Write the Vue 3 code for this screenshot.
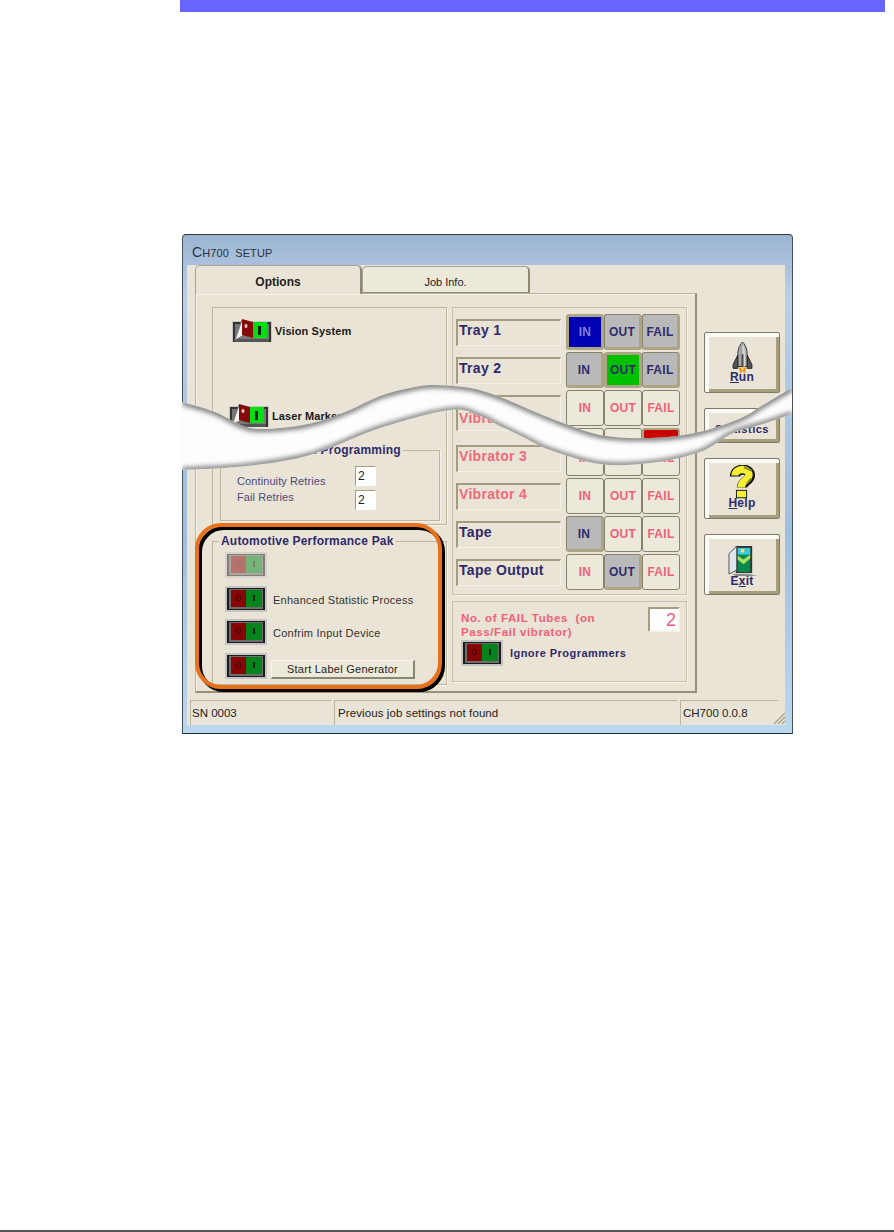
<script setup>
const rows = [
  { label: 'Tray 1', on: true, states: ['blue', 'grey', 'grey'] },
  { label: 'Tray 2', on: true, states: ['grey', 'green', 'grey'] },
  { label: 'Vibrator 1', torn: true, states: ['', '', ''] },
  { states: ['', '', 'red'], cut: true },
  { label: 'Vibrator 3', states: ['', '', ''] },
  { label: 'Vibrator 4', states: ['', '', ''] },
  { label: 'Tape', on: true, states: ['grey', '', ''] },
  { label: 'Tape Output', on: true, states: ['', 'grey', ''] }
]
const names = ['IN', 'OUT', 'FAIL']

// curve through the points of the tear
const smooth = (pts) => {
  let d = ''
  for (let i = 0; i < pts.length - 1; i++) {
    const p0 = pts[i - 1] || pts[i]
    const p1 = pts[i]
    const p2 = pts[i + 1]
    const p3 = pts[i + 2] || p2
    d += ` C${p1[0] + (p2[0] - p0[0]) / 6} ${p1[1] + (p2[1] - p0[1]) / 6} ${p2[0] - (p3[0] - p1[0]) / 6} ${p2[1] - (p3[1] - p1[1]) / 6} ${p2[0]} ${p2[1]}`
  }
  return d
}
const topEdge = [[182, 402], [215, 412], [250, 428], [290, 427], [320, 421], [350, 410], [380, 396], [410, 388], [433, 385], [470, 388], [500, 397], [550, 418], [600, 435], [650, 438], [695, 433], [739, 419], [763, 405], [792, 388]]
const botEdge = [[792, 414], [763, 424], [733, 433], [700, 452], [650, 463], [600, 464], [550, 450], [525, 438], [500, 426], [480, 416], [450, 410], [380, 428], [310, 455], [247, 466], [182, 470]]
const topPath = `M182 402${smooth(topEdge)}`
const botPath = `M792 414${smooth(botEdge)}`
const bandPath = `${topPath} L792 414${smooth(botEdge)} Z`
</script>

<template>
  <div class="page">
    <svg class="defs" width="0" height="0">
      <symbol id="sw-off" viewBox="0 0 42 26">
        <rect width="42" height="26" fill="#c4c4c4" />
        <rect x="2" y="2" width="38" height="22" fill="#1c1c1c" />
        <rect x="4" y="3" width="34" height="20" fill="#6e6e6e" />
        <rect x="6" y="4" width="15" height="17" fill="#870505" />
        <rect x="21" y="4" width="16" height="17" fill="#04841a" />
        <ellipse cx="13.5" cy="12" rx="2" ry="3" fill="none" stroke="#3a0000" />
        <rect x="28" y="9" width="2" height="6" fill="#021" />
      </symbol>
      <symbol id="sw-on" viewBox="0 0 40 26">
        <rect y="3" width="40" height="21" fill="#c8c8c0" />
        <rect x="1" y="4" width="2" height="20" fill="#333" />
        <rect x="2" y="4" width="37" height="2" fill="#333" />
        <rect x="2" y="21" width="37" height="3" fill="#555" />
        <rect x="37" y="4" width="2" height="20" fill="#333" />
        <rect x="3" y="6" width="34" height="15" fill="#777" />
        <polygon points="3,22 10,2 12,17" fill="#f4f4f0" stroke="#777" />
        <polygon points="10,1 21,4 21,20 10,17" fill="#870a0a" />
        <ellipse cx="14" cy="8" rx="1.5" ry="2" fill="#f0c8c8" />
        <rect x="21" y="4" width="14" height="16" fill="#04de12" />
        <rect x="26" y="8" width="3" height="9" fill="#021" />
      </symbol>
      <symbol id="rocket" viewBox="0 0 24 34">
        <path d="M12 0 C8 4 7 9 7 14 V26 H17 V14 C17 9 16 4 12 0 Z" fill="#a8a8a8" stroke="#333" />
        <path d="M12 1 C14 5 15 10 15 14 V26 H12 Z" fill="#d6d6d6" />
        <path d="M7 14 L2 24 V28 H7 Z M17 14 L22 24 V28 H17 Z" fill="#555" stroke="#222" />
        <rect x="11" y="13" width="2" height="13" fill="#444" />
        <path d="M8 27 H16 L14 34 L12 30 L10 34 Z" fill="#f08a20" />
        <path d="M10 27 H14 L12 31 Z" fill="#ffd84a" />
      </symbol>
      <symbol id="help" viewBox="0 0 28 36">
        <path d="M6.5 12 C6.5 3 22.5 2 22.5 11 C22.5 17 14 17 14 24" fill="none" stroke="#111" stroke-width="11" />
        <path d="M6.5 11 C6.5 3 21.5 2 21.5 10.5 C21.5 16 13 16 13 24" fill="none" stroke="#f4ee30" stroke-width="8" />
        <rect x="8" y="27" width="11" height="8" fill="#f4ee30" stroke="#111" />
        <path d="M16 2 L25 6 M24 14 L19 20" stroke="#8a8420" stroke-width="2" />
      </symbol>
      <symbol id="exit" viewBox="0 0 30 32">
        <path d="M4 30 H22 L30 32 H8 Z" fill="#8a8a8a" />
        <rect x="8" y="1" width="17" height="28" fill="#333" />
        <rect x="10" y="3" width="13" height="25" fill="#088a4a" />
        <rect x="10" y="3" width="13" height="7" fill="#38c8e0" />
        <circle cx="15" cy="6" r="2" fill="#ffe860" />
        <path d="M10 11 L16 15 L23 10 V14 L16 20 L10 15 Z" fill="#a8e060" />
        <path d="M1 9 L9 1 V26 L1 30 Z" fill="#dfe6ee" stroke="#555" />
      </symbol>
    </svg>

    <div class="topbar"></div>

    <div class="window">
      <div class="titlebar"><span class="big">C</span>H700&nbsp; SETUP</div>
      <div class="client">
        <div class="tabs">
          <div class="tab active">Options</div>
          <div class="tab">Job Info.</div>
        </div>

        <div class="body">
          <div class="panel">
            <div class="col-left">
              <div class="frame">
                <div class="opt vision">
                  <svg class="sw-big"><use href="#sw-on" /></svg>
                  <span>Vision System</span>
                </div>
                <div class="opt laser">
                  <svg class="sw-big"><use href="#sw-on" /></svg>
                  <span>Laser Marker</span>
                </div>
                <fieldset class="retries">
                  <legend>Test and Programming</legend>
                  <div class="retry-grid">
                    <div class="retry-names">
                      <span>Continuity Retries</span>
                      <span>Fail Retries</span>
                    </div>
                    <div class="retry-fields">
                      <div class="field">2</div>
                      <div class="field">2</div>
                    </div>
                  </div>
                </fieldset>
              </div>

              <fieldset class="auto">
                <legend>Automotive Performance Pak</legend>
                <div class="auto-row">
                  <svg class="sw faded"><use href="#sw-off" /></svg>
                </div>
                <div class="auto-row">
                  <svg class="sw"><use href="#sw-off" /></svg>
                  <span>Enhanced Statistic Process</span>
                </div>
                <div class="auto-row">
                  <svg class="sw"><use href="#sw-off" /></svg>
                  <span>Confrim Input Device</span>
                </div>
                <div class="auto-row">
                  <svg class="sw"><use href="#sw-off" /></svg>
                  <div class="label-btn">Start Label Generator</div>
                </div>
              </fieldset>
            </div>

            <div class="col-mid">
              <div class="frame-io">
                <div v-for="(row, r) in rows" :key="r" class="io-row" :class="{ cut: row.cut }">
                  <div v-if="row.label" class="io-label" :class="{ on: row.on, torn: row.torn }">{{ row.label }}</div>
                  <div class="io-btns">
                    <div
                      v-for="(name, i) in names"
                      :key="name"
                      class="io-btn"
                      :class="row.states[i]"
                    >{{ row.cut ? '' : name }}</div>
                  </div>
                </div>
              </div>

              <div class="frame-fail">
                <div class="fail-top">
                  <div class="fail-text">No. of FAIL Tubes&nbsp; (on<br />Pass/Fail vibrator)</div>
                  <div class="fail-field">2</div>
                </div>
                <div class="ignore">
                  <svg class="sw"><use href="#sw-off" /></svg>
                  <span>Ignore Programmers</span>
                </div>
              </div>
            </div>
          </div>

          <div class="col-right">
            <div class="cmd">
              <svg class="ic-run"><use href="#rocket" /></svg>
              <span><u>R</u>un</span>
            </div>
            <div class="cmd short"><span>Statistics</span></div>
            <div class="cmd">
              <svg class="ic-help"><use href="#help" /></svg>
              <span><u>H</u>elp</span>
            </div>
            <div class="cmd">
              <svg class="ic-exit"><use href="#exit" /></svg>
              <span>E<u>x</u>it</span>
            </div>
          </div>
        </div>

        <div class="status">
          <div class="cell sn">SN 0003</div>
          <div class="cell msg">Previous job settings not found</div>
          <div class="cell ver">CH700 0.0.8</div>
          <svg class="grip" width="12" height="12" viewBox="0 0 12 12">
            <path d="M1 12 L12 1 M5 12 L12 5 M9 12 L12 9" stroke="#a09a86" stroke-width="1.2" />
          </svg>
        </div>
      </div>

      <div class="ring black"></div>
      <div class="ring orange"></div>

      <svg class="tear" width="610" height="499" viewBox="182 234 610 499">
        <defs>
          <clipPath id="band"><path :d="bandPath" /></clipPath>
          <filter id="soft" x="-5%" y="-30%" width="110%" height="160%"><feGaussianBlur stdDeviation="2.5" /></filter>
        </defs>
        <path :d="bandPath" fill="#fdfdfd" />
        <g clip-path="url(#band)" fill="none" filter="url(#soft)">
          <path :d="topPath" stroke="#777" stroke-width="6" />
          <path :d="botPath" stroke="#777" stroke-width="5" />
        </g>
      </svg>
    </div>

    <div class="bottom-rule"></div>
  </div>
</template>

<style>
html, body {
  margin: 0;
  background: #fff;
}
</style>

<style scoped>
.page {
  height: 1232px;
  display: flex;
  flex-direction: column;
  font-family: "Liberation Sans", Arial, sans-serif;
  font-size: 11px;
  color: #2f2b6b;
  overflow: hidden;
}
.defs {
  position: absolute;
}
.topbar {
  height: 12px;
  margin: 0 9px 0 180px;
  background: #6666ff;
}
.bottom-rule {
  height: 2px;
  margin-top: auto;
  background: #555;
}

.window {
  position: relative;
  box-sizing: border-box;
  width: 611px;
  height: 500px;
  margin: 222px 0 0 182px;
  padding: 0 7px 8px 4px;
  border: 1px solid #4a5058;
  border-top-color: #333;
  border-bottom-color: #16323c;
  border-radius: 4px 4px 0 0;
  background: linear-gradient(to bottom, #9bb4d2 0, #b9cfe6 60px, #9fc0dd 300px, #bcd8ef 500px);
}
.titlebar {
  height: 30px;
  box-sizing: border-box;
  padding: 9px 0 0 5px;
  font-size: 11px;
  color: #2c3240;
  letter-spacing: 0.1px;
}
.big {
  font-size: 14px;
}
.client {
  height: 460px;
  background: #e9e4d5;
}

.tabs {
  display: flex;
  height: 28px;
  padding-left: 8px;
}
.tab {
  box-sizing: border-box;
  width: 168px;
  margin: 1px 0 0 0;
  padding-top: 9px;
  border: 1px solid #a8a392;
  border-right: 2px solid #8f8a72;
  border-bottom: 1px solid #8f8a72;
  border-radius: 5px 5px 0 0;
  text-align: center;
  background: #ece8da;
  color: #222;
}
.tab.active {
  position: relative;
  z-index: 1;
  width: 167px;
  height: 29px;
  margin: 0;
  padding-top: 9px;
  border-bottom: 0;
  font-size: 12px;
  font-weight: bold;
  color: #222;
  background: #e9e4d5;
}

.body {
  display: flex;
}
.panel {
  box-sizing: border-box;
  display: flex;
  flex: none;
  width: 502px;
  height: 400px;
  margin-left: 8px;
  padding: 13px 0 0 16px;
  border: 1px solid #b9b4a0;
  border-right: 2px solid #94907a;
  border-bottom: 2px solid #94907a;
  box-shadow: inset 1px 1px 0 #f6f3ea;
}

.col-left {
  flex: none;
  width: 235px;
  display: flex;
  flex-direction: column;
}
.frame {
  box-sizing: border-box;
  height: 218px;
  padding: 10px 0 0 7px;
  border: 1px solid #bcb7a2;
  box-shadow: 1px 1px 0 #f6f3ea;
}
.opt {
  display: flex;
  align-items: center;
  gap: 3px;
  font-weight: bold;
  color: #1a1a1a;
  letter-spacing: 0.1px;
}
.vision {
  margin-left: 12px;
}
.laser {
  margin: 59px 0 0 9px;
}
.sw-big {
  width: 40px;
  height: 26px;
}
.retries {
  box-sizing: border-box;
  width: 220px;
  height: 78px;
  margin: 14px 0 0 0;
  padding: 9px 0 0 16px;
  border: 1px solid #bcb7a2;
  box-shadow: 1px 1px 0 #f6f3ea;
  min-width: 0;
}
.retries legend {
  margin-left: 28px;
  padding: 0 2px;
  font-size: 12px;
  font-weight: bold;
  line-height: 14px;
  letter-spacing: 0.2px;
}
.retry-grid {
  display: flex;
  justify-content: space-between;
  width: 139px;
}
.retry-names {
  display: flex;
  flex-direction: column;
  gap: 3px;
  padding-top: 9px;
  line-height: 13px;
  color: #4b4a7c;
  letter-spacing: 0.1px;
}
.retry-fields {
  display: flex;
  flex-direction: column;
  gap: 4px;
}
.field {
  box-sizing: border-box;
  width: 21px;
  height: 20px;
  padding: 2px 0 0 2px;
  border: 1px solid #a29c84;
  border-right-color: #fff;
  border-bottom-color: #fff;
  background: #fff;
  font-size: 12px;
  color: #222;
}
.auto {
  box-sizing: border-box;
  width: 235px;
  height: 151px;
  margin: 9px 0 0 0;
  padding: 4px 0 0 12px;
  border: 1px solid #bcb7a2;
  box-shadow: 1px 1px 0 #f6f3ea;
  min-width: 0;
}
.auto legend {
  margin-left: -6px;
  padding: 0 2px;
  font-size: 12px;
  font-weight: bold;
  line-height: 14px;
  letter-spacing: 0.2px;
}
.auto-row {
  display: flex;
  align-items: center;
  gap: 6px;
  height: 26px;
  margin-bottom: 7.7px;
  color: #333;
  letter-spacing: 0.25px;
}
.auto-row > span {
  padding-top: 2px;
}
.sw {
  width: 42px;
  height: 26px;
  flex: none;
}
.faded {
  opacity: 0.5;
}
.label-btn {
  box-sizing: border-box;
  width: 144px;
  height: 19px;
  margin: 6px 0 0 -2px;
  border: 1px solid #f8f6ee;
  border-right: 2px solid #8a8674;
  border-bottom: 2px solid #8a8674;
  background: #ece8da;
  text-align: center;
  line-height: 16px;
  color: #222;
}

.col-mid {
  flex: none;
  width: 235px;
  margin-left: 5px;
  display: flex;
  flex-direction: column;
}
.frame-io {
  box-sizing: border-box;
  height: 288px;
  padding: 6px 0 0 3px;
  border: 1px solid #c6c1ac;
  box-shadow: 1px 1px 0 #f6f3ea;
}
.io-row {
  position: relative;
  display: flex;
  justify-content: flex-end;
  height: 38px;
  padding-right: 6px;
}
.io-row.cut {
  height: 12px;
}
.io-label {
  position: absolute;
  left: 0;
  top: 5px;
  box-sizing: border-box;
  width: 105px;
  height: 27px;
  padding: 1px 0 0 1px;
  border-top: 2px solid #a39c80;
  border-left: 2px solid #a39c80;
  border-right: 1px solid #f4f1e6;
  border-bottom: 1px solid #f4f1e6;
  font-size: 14px;
  font-weight: bold;
  letter-spacing: 0.3px;
  color: #f06a7c;
}
.io-label.on {
  color: #2f2b6b;
}
.io-label.torn {
  height: 36px;
  padding-top: 13px;
}
.io-btns {
  display: flex;
  height: 36px;
}
.cut .io-btns {
  height: 12px;
}
.io-btn {
  box-sizing: border-box;
  width: 38px;
  height: 36px;
  border: 1px solid #85826f;
  border-radius: 3px;
  background: #ece8da;
  text-align: center;
  line-height: 34px;
  font-size: 12px;
  font-weight: bold;
  letter-spacing: 0.3px;
  color: #f0607a;
}
.cut .io-btn {
  height: 12px;
}
.io-btn.grey {
  background: #b9b9b9;
  border-right: 3px solid #ada483;
  border-bottom: 3px solid #ada483;
  color: #2f2b6b;
}
.io-btn.blue {
  background: #0000b4;
  border: 3px solid #ada483;
  line-height: 30px;
  color: #8080d8;
}
.io-btn.green {
  background: #00c000;
  border: 3px solid #ada483;
  line-height: 30px;
  color: #2f2b6b;
}
.io-btn.red {
  background: #c80000;
  border: 2px solid #ada483;
}
.frame-fail {
  box-sizing: border-box;
  height: 81px;
  margin-top: 6px;
  padding: 5px 6px 0 8px;
  border: 1px solid #c6c1ac;
  box-shadow: 1px 1px 0 #f6f3ea;
}
.fail-top {
  display: flex;
  justify-content: space-between;
}
.fail-text {
  padding-top: 4px;
  font-size: 11.5px;
  font-weight: bold;
  line-height: 14px;
  letter-spacing: 0.6px;
  color: #f0607a;
}
.fail-field {
  box-sizing: border-box;
  width: 32px;
  height: 25px;
  padding-right: 2px;
  border: 2px solid #a39c80;
  border-right-color: #f6f3ea;
  border-bottom-color: #f6f3ea;
  background: #fff;
  text-align: right;
  font-size: 18px;
  line-height: 22px;
  color: #f0607a;
}
.ignore {
  display: flex;
  align-items: center;
  gap: 7px;
  margin: 1px 0 0 0;
  font-weight: bold;
  letter-spacing: 0.45px;
}

.col-right {
  flex: none;
  width: 76px;
  margin: 39px 0 0 7px;
  display: flex;
  flex-direction: column;
}
.cmd {
  box-sizing: border-box;
  display: flex;
  flex-direction: column;
  align-items: center;
  height: 61px;
  margin-bottom: 15px;
  border: 1px solid #7c7a6a;
  border-radius: 2px;
  background: #e9e4d5;
  box-shadow: inset 4px 4px 0 #fbfaf5, inset -3px -3px 0 #a79f7c;
  font-size: 12px;
  font-weight: bold;
  line-height: 13px;
  letter-spacing: 0.3px;
}
.cmd.short {
  height: 35px;
  padding-top: 14px;
}
.cmd.short span {
  font-size: 11px;
  letter-spacing: 0.5px;
}
.ic-run {
  width: 23px;
  height: 32px;
  margin: 9px 0 -3px;
}
.ic-help {
  width: 26px;
  height: 34px;
  margin: 6px 0 -2px;
}
.ic-exit {
  width: 29px;
  height: 31px;
  margin: 10px 0 -1px;
}

.status {
  position: relative;
  display: flex;
  gap: 3px;
  height: 25px;
  margin: 7px 0 0 3px;
  font-size: 11.5px;
  color: #222;
}
.cell {
  box-sizing: border-box;
  padding: 6px 0 0 1px;
  border-top: 1px solid #bcb7a2;
  border-left: 1px solid #bcb7a2;
}
.sn {
  width: 141px;
}
.msg {
  width: 343px;
  padding-left: 3px;
  letter-spacing: 0.1px;
}
.ver {
  width: 98px;
  padding-left: 2px;
}
.grip {
  position: absolute;
  right: 0;
  bottom: 1px;
}

.ring {
  position: absolute;
  box-sizing: border-box;
  border-radius: 26px;
  border-style: solid;
  border-width: 4px;
  pointer-events: none;
}
.black {
  left: 15px;
  top: 291px;
  width: 247px;
  height: 166px;
  border-color: #000;
}
.orange {
  left: 12px;
  top: 288px;
  width: 247px;
  height: 166px;
  border-color: #e8701a;
}
.tear {
  position: absolute;
  left: -1px;
  top: -1px;
  pointer-events: none;
}
</style>
